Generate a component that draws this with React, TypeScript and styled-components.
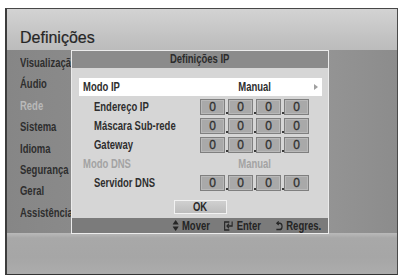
import React from 'react';
import styled, { createGlobalStyle } from 'styled-components';

const Global = createGlobalStyle`
  html, body { padding: 0; background: #ffffff; }
  body { margin: 8px 0 0 5px; }
`;

const FONT = `"Liberation Sans", Arial, sans-serif`;
const SCALE = 0.79;

const Frame = styled.div`
  width: 393px;
  height: 267px;
  box-sizing: border-box;
  border-top: 1px solid #474747;
  border-left: 2px solid #3c3c3c;
  border-right: 1px solid #4a4a4a;
  border-bottom: 1px solid #333;
  display: flex;
  flex-direction: column;
  overflow: hidden;
`;

const Header = styled.div`
  height: 41px;
  flex: none;
  box-sizing: border-box;
  padding: 20px 0 0 13px;
  background: linear-gradient(to bottom, #d3d3d3, #c2c2c2 70%, #bcbcbc);
`;

const Title = styled.div`
  font-family: ${FONT};
  font-size: 16px;
  line-height: 18px;
  color: #262626;
  -webkit-text-stroke: 0.2px currentColor;
`;

/* condensed TV-style lettering */
const Cond = styled.span<{ $origin?: string }>`
  display: inline-block;
  white-space: nowrap;
  transform: scaleX(${SCALE});
  transform-origin: ${p => p.$origin || 'left'} center;
`;

const Band = styled.div`
  position: relative;
  height: 183px;
  flex: none;
  background: linear-gradient(to right, #868686, #8d8d8d 30%, #979797 75%, #8c8c8c);
`;

const Menu = styled.ul`
  list-style: none;
  margin: 0;
  padding: 3px 0 0 13px;
`;

const MenuItem = styled.li<{ $dim?: boolean }>`
  font-family: ${FONT};
  font-weight: 700;
  font-size: 12px;
  line-height: 21.4px;
  height: 21.4px;
  color: ${p => (p.$dim ? '#b9b9b9' : '#2e2e2e')};
  white-space: nowrap;
`;

const Bottom = styled.div`
  flex: 1;
  background: linear-gradient(to bottom, #bababa, #a8a8a8 12%, #a6a6a6 60%, #acacac);
`;

const Dialog = styled.div`
  position: absolute;
  left: 64px;
  top: 0;
  width: 258px;
  height: 184px;
  box-sizing: border-box;
  border: 1px solid #ececec;
  background: #d6d6d6;
  display: flex;
  flex-direction: column;
  z-index: 2;
  font-family: ${FONT};
  font-weight: 700;
  font-size: 12px;
`;

const DialogTitle = styled.div`
  height: 17px;
  flex: none;
  background: #8b8b8b;
  text-align: center;
  line-height: 17px;
  color: #2b2b2b;
`;

const Body = styled.div`
  flex: 1;
  padding: 10px 6px 0 7px;
  display: flex;
  flex-direction: column;
`;

const Row = styled.div<{ $active?: boolean }>`
  display: grid;
  grid-template-columns: 121px 110px 1fr;
  align-items: center;
  height: ${p => (p.$active ? '18px' : '19px')};
  margin-bottom: ${p => (p.$active ? '1px' : '0')};
  background: ${p => (p.$active ? '#ffffff' : 'transparent')};
  color: #2e2e2e;
`;

const Label = styled.span<{ $sub?: boolean; $dim?: boolean }>`
  padding-left: ${p => (p.$sub ? '15px' : '4px')};
  color: ${p => (p.$dim ? '#a3a3a3' : '#2e2e2e')};
  white-space: nowrap;
`;

const Value = styled.span<{ $dim?: boolean }>`
  text-align: center;
  color: ${p => (p.$dim ? '#a3a3a3' : '#2e2e2e')};
`;

const Arrow = styled.span`
  justify-self: end;
  margin-right: 4px;
  width: 0;
  height: 0;
  border-top: 3px solid transparent;
  border-bottom: 3px solid transparent;
  border-left: 4px solid #a0a0a0;
`;

const Octets = styled.div`
  display: flex;
  align-items: flex-end;
`;

const Octet = styled.span`
  width: 25px;
  height: 16px;
  box-sizing: border-box;
  border: 1px solid #7f7f7f;
  box-shadow: inset 0 0 0 1px #b9b9b9;
  background: #a9a9a9;
  text-align: center;
  line-height: 14px;
  font-weight: 400;
  -webkit-text-stroke: 0.3px currentColor;
  color: #303030;
`;

const Dot = styled.span`
  width: 3px;
  height: 16px;
  position: relative;
  &::after {
    content: '';
    position: absolute;
    left: 1px;
    bottom: 1px;
    width: 1.5px;
    height: 1.5px;
    background: #3a3a3a;
  }
`;

const OkWrap = styled.div`
  display: flex;
  justify-content: center;
  margin-top: 8px;
  padding-right: 1px;
`;

const OkButton = styled.div`
  width: 53px;
  height: 14px;
  box-sizing: border-box;
  border: 1px solid #f2f2f2;
  background: linear-gradient(to bottom, #d0d0d0, #bcbcbc);
  text-align: center;
  line-height: 12px;
  color: #2a2a2a;
`;

const Footer = styled.div`
  margin-top: auto;
  height: 15px;
  flex: none;
  background: #7b7b7b;
  display: flex;
  justify-content: flex-end;
  align-items: center;
  padding-right: 7px;
  color: #242424;
`;

const Hints = styled.div`
  display: flex;
  align-items: center;
  gap: 18px;
  transform: scaleX(${SCALE});
  transform-origin: right center;
  white-space: nowrap;
`;

const Hint = styled.span`
  display: flex;
  align-items: center;
  gap: 4px;
`;

function IpField() {
  return (
    <Octets>
      <Octet>0</Octet>
      <Dot />
      <Octet>0</Octet>
      <Dot />
      <Octet>0</Octet>
      <Dot />
      <Octet>0</Octet>
    </Octets>
  );
}

const MoveIcon = () => (
  <svg width="8" height="11" viewBox="0 0 8 11">
    <path d="M4 0 L8 4.5 L0 4.5 Z" fill="#262626" />
    <path d="M0 6.5 L8 6.5 L4 11 Z" fill="#262626" />
  </svg>
);

const EnterIcon = () => (
  <svg width="12" height="10" viewBox="0 0 12 10" fill="none" stroke="#262626" strokeWidth="1.4">
    <path d="M7 1 H1 V9 H7" />
    <path d="M10.5 0.5 V5 H4" />
    <path d="M6.5 2.8 L4 5 L6.5 7.2" />
  </svg>
);

const ReturnIcon = () => (
  <svg width="10" height="10" viewBox="0 0 10 10" fill="none" stroke="#262626" strokeWidth="1.5">
    <path d="M3 2.2 H5.5 A3.2 3.2 0 0 1 5.5 8.6 H1.5" />
    <path d="M4.5 0.5 L2.2 2.2 L4.5 3.9" />
  </svg>
);

const menu = ['Visualização', 'Áudio', 'Rede', 'Sistema', 'Idioma', 'Segurança', 'Geral', 'Assistência'];

export default function App() {
  return (
    <>
      <Global />
      <Frame>
        <Header>
          <Title>Definições</Title>
        </Header>
        <Band>
          <Menu>
            {menu.map(m => (
              <MenuItem key={m} $dim={m === 'Rede'}>
                <Cond>{m}</Cond>
              </MenuItem>
            ))}
          </Menu>
          <Dialog>
            <DialogTitle>
              <Cond $origin="center">Definições IP</Cond>
            </DialogTitle>
            <Body>
              <Row $active>
                <Label><Cond>Modo IP</Cond></Label>
                <Value><Cond $origin="center">Manual</Cond></Value>
                <Arrow />
              </Row>
              <Row>
                <Label $sub><Cond>Endereço IP</Cond></Label>
                <IpField />
              </Row>
              <Row>
                <Label $sub><Cond>Máscara Sub-rede</Cond></Label>
                <IpField />
              </Row>
              <Row>
                <Label $sub><Cond>Gateway</Cond></Label>
                <IpField />
              </Row>
              <Row>
                <Label $dim><Cond>Modo DNS</Cond></Label>
                <Value $dim><Cond $origin="center">Manual</Cond></Value>
              </Row>
              <Row>
                <Label $sub><Cond>Servidor DNS</Cond></Label>
                <IpField />
              </Row>
              <OkWrap>
                <OkButton><Cond $origin="center">OK</Cond></OkButton>
              </OkWrap>
            </Body>
            <Footer>
              <Hints>
                <Hint><MoveIcon />Mover</Hint>
                <Hint><EnterIcon />Enter</Hint>
                <Hint><ReturnIcon />Regres.</Hint>
              </Hints>
            </Footer>
          </Dialog>
        </Band>
        <Bottom />
      </Frame>
    </>
  );
}
